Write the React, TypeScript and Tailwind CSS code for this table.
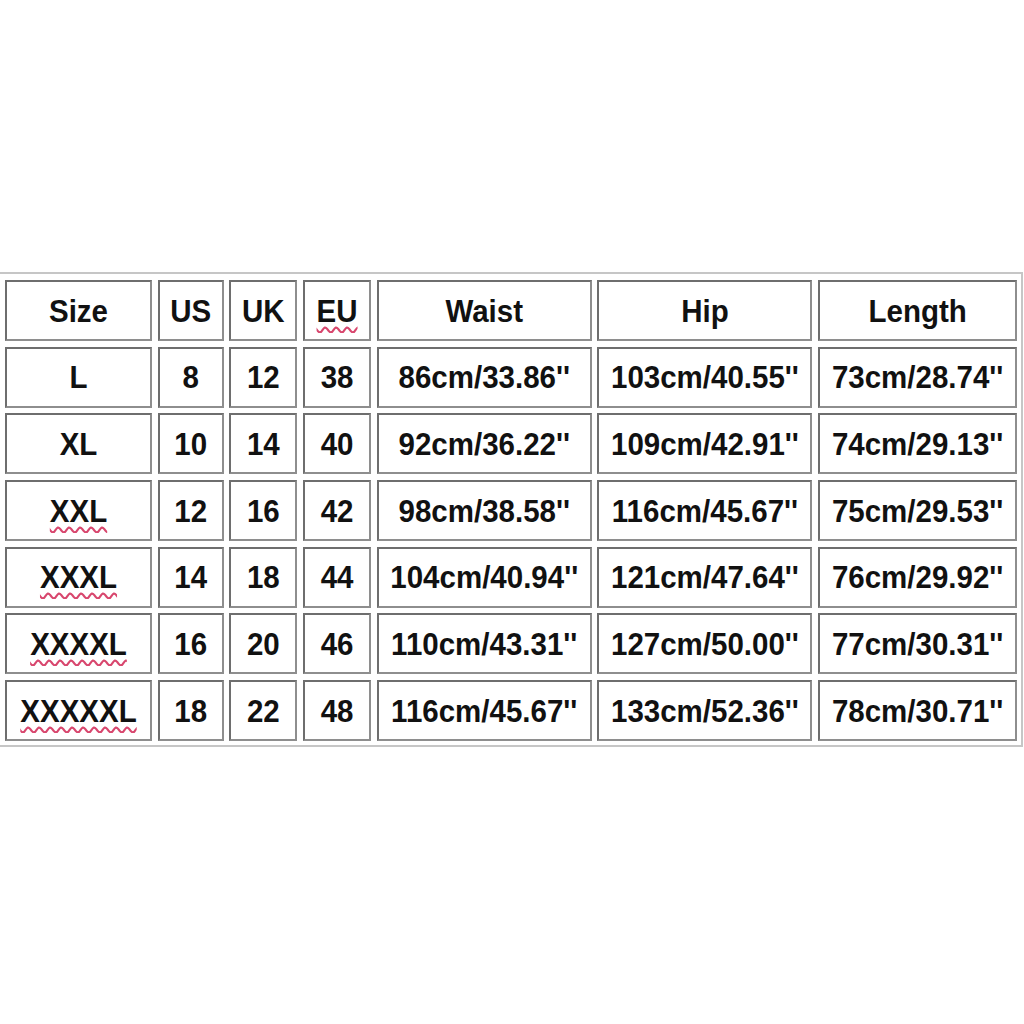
import React from "react";

const header = ["Size", "US", "UK", "EU", "Waist", "Hip", "Length"];
const rows: string[][] = [
  ["L", "8", "12", "38", "86cm/33.86''", "103cm/40.55''", "73cm/28.74''"],
  ["XL", "10", "14", "40", "92cm/36.22''", "109cm/42.91''", "74cm/29.13''"],
  ["XXL", "12", "16", "42", "98cm/38.58''", "116cm/45.67''", "75cm/29.53''"],
  ["XXXL", "14", "18", "44", "104cm/40.94''", "121cm/47.64''", "76cm/29.92''"],
  ["XXXXL", "16", "20", "46", "110cm/43.31''", "127cm/50.00''", "77cm/30.31''"],
  ["XXXXXL", "18", "22", "48", "116cm/45.67''", "133cm/52.36''", "78cm/30.71''"],
];

const squiggle = new Set(["EU", "XXL", "XXXL", "XXXXL", "XXXXXL"]);

function Cell({ text }: { text: string }) {
  const wavy = squiggle.has(text);
  return (
    <div className="flex h-[61px] items-center justify-center border-2 border-t-[#6e6e6e] border-l-[#6e6e6e] border-r-[#8e8e8e] border-b-[#8e8e8e] bg-white">
      <span
        className={
          "inline-block scale-y-[1.07] text-[29.5px] font-bold leading-none text-[#111] " +
          (wavy
            ? "underline decoration-wavy decoration-[#d8476e] decoration-[1.5px] underline-offset-[4px]"
            : "")
        }
      >
        {text}
      </span>
    </div>
  );
}

export default function App() {
  const all = [header, ...rows];
  return (
    <div
      className="min-h-[1024px] w-[1024px] overflow-hidden bg-white pt-[272px]"
      style={{ fontFamily: '"Liberation Sans", Arial, sans-serif' }}
    >
      <div className="ml-[-2px] w-[1025px] border-2 border-[#c6c6c6] pb-[4px] pl-[4px] pt-[6px]">
        <div className="ml-[1px] grid grid-cols-[147px_66px_68px_68px_215px_215px_199px] gap-x-[5.7px] gap-y-[5.67px]">
          {all.map((r, i) => r.map((t, j) => <Cell key={i + "-" + j} text={t} />))}
        </div>
      </div>
    </div>
  );
}
